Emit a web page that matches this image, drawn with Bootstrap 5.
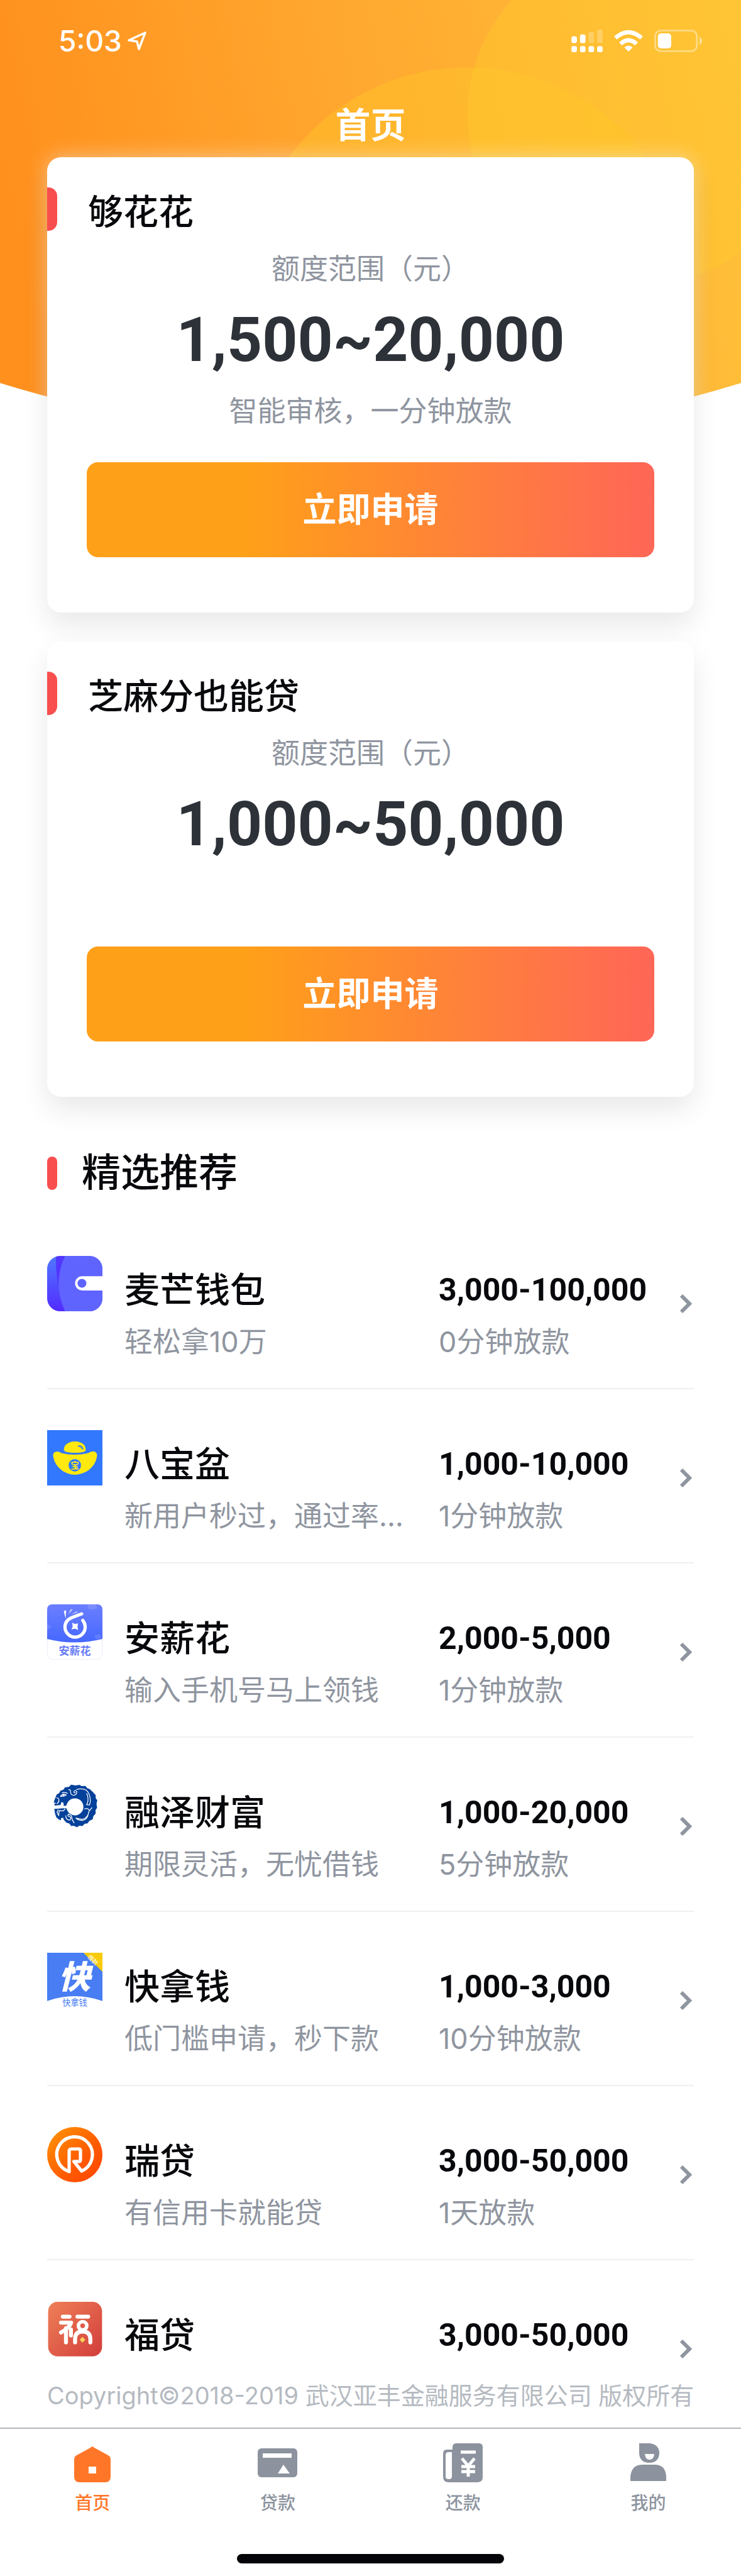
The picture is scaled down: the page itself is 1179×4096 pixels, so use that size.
<!DOCTYPE html>
<html lang="zh-CN">
<head>
<meta charset="utf-8">
<meta name="viewport" content="width=device-width, initial-scale=1">
<title>首页</title>
<link href="https://cdn.jsdelivr.net/npm/bootstrap@5.3.0/dist/css/bootstrap.min.css" rel="stylesheet">
<style>
  body { font-family: Inter, "Noto Sans CJK SC", sans-serif; color: #08090c; background: #fff; }
  svg { display: block; flex: none; }
  .stage { display: grid; grid-template-columns: minmax(0, 1fr); }
  .stage > * { grid-area: 1 / 1; }
  .hero-bg { width: 100%; height: 700px; }
  .status { padding: 34px 62px 0 93px; height: 96px; }
  .clock { font-size: 46px; line-height: 62px; font-weight: 500; }
  .page-title { font-size: 56px; line-height: 80px; font-weight: 700; margin: 63px 0 11px; }
  .side { padding-left: 75px; padding-right: 75px; }
  .loan { border: 0; border-radius: 22px; padding: 48px 63px 88px; margin-bottom: 46px; box-shadow: 0 20px 44px rgba(0, 0, 0, .09); }
  .lit { box-shadow: 0 20px 44px rgba(0, 0, 0, .09), 0 0 32px rgba(255, 255, 255, .5); }
  .loan-title { font-size: 56px; line-height: 78px; font-weight: 500; margin: 0 0 22px -63px; }
  .loan-title::before { content: ""; width: 16px; height: 69px; background: #f94e4e; border-radius: 0 14px 14px 0; margin-right: 49px; }
  .note { font-size: 45px; line-height: 60px; color: #8f959f; font-weight: 400; }
  .range { font-family: Roboto, sans-serif; font-weight: 700; font-size: 98px; line-height: 166px; color: #2d3138; }
  .apply { --bs-btn-color: #fff; --bs-btn-hover-color: #fff; border: 0; height: 151px; margin-top: 51px; border-radius: 18px; font-size: 54px; font-weight: 700; background: linear-gradient(90deg, #ffa019 28%, #ff6657); }
  .picks { font-size: 62px; line-height: 76px; font-weight: 500; margin: 83px 0 29px; }
  .picks::before { content: ""; width: 16px; height: 53px; background: #f94e4e; border-radius: 8px; margin-right: 39px; }
  .offer { display: flex; align-items: flex-start; gap: 35px; padding: 65px 3px 43px 0; border-bottom: 2px solid #f0f0f1; color: inherit; text-decoration: none; }
  .offer-last { border: 0; padding-bottom: 28px; }
  .offer-text { padding-top: 18px; }
  .offer-sum { width: 348px; flex: none; }
  .offer-name { font-size: 56px; line-height: 72px; font-weight: 500; }
  .amount { font-family: Roboto, sans-serif; font-weight: 700; font-size: 50px; line-height: 72px; white-space: nowrap; }
  .offer-text .note { margin-top: 17px; }
  .chev { margin-top: 60px; }
  .copyright { font-size: 38px; line-height: 60px; color: #b5bac1; margin-bottom: 21px; white-space: nowrap; }
  .tabbar { border-top: 2px solid #b4b6bc; padding: 23px 0 22px; }
  .tab { flex: 1 1 0; display: flex; flex-direction: column; align-items: center; gap: 13px; color: #8c939e; font-size: 28px; line-height: 40px; font-weight: 500; text-decoration: none; }
  .tab.active { color: #ff7628; }
  .home-bar { width: 36%; height: 15px; border-radius: 8px; background: #050509; margin: 61px auto 0; }
</style>
</head>
<body>
<div class="stage">
  <svg class="hero-bg" viewBox="0 0 1179 700" preserveAspectRatio="none" aria-hidden="true">
    <defs>
      <linearGradient id="sky" gradientUnits="userSpaceOnUse" x1="0" y1="250" x2="1179" y2="0">
        <stop offset="0" stop-color="#ff901d"/><stop offset=".5" stop-color="#ffa930"/><stop offset="1" stop-color="#ffc23a"/>
      </linearGradient>
      <clipPath id="dome"><path d="M0 0H1179V609Q590 790 0 609Z"/></clipPath>
    </defs>
    <g clip-path="url(#dome)">
      <rect width="1179" height="700" fill="url(#sky)"/>
      <circle cx="744" cy="462" r="355" fill="#ffc928" fill-opacity=".4"/>
      <circle cx="1016" cy="182" r="272" fill="#ffcb2e" fill-opacity=".4"/>
    </g>
  </svg>

  <div>
    <header class="text-white">
      <div class="status d-flex justify-content-between align-items-center">
        <div class="d-flex align-items-center gap-2">
          <span class="clock">5:03</span>
          <svg width="32" height="32" viewBox="0 0 32 32" fill="none" stroke="#fff" stroke-width="3.500" stroke-linejoin="round" aria-hidden="true"><path d="M29 3 3 15l13 2 3 12z"/></svg>
        </div>
        <div class="d-flex align-items-center gap-3">
          <svg width="50" height="36" viewBox="0 0 51 37" fill="#fff" aria-hidden="true">
            <rect y="11" width="9" height="11" rx="3"/><rect x="14" y="8" width="9" height="14" rx="3"/>
            <rect x="28" y="4" width="9" height="18" rx="3" opacity=".25"/><rect x="42" width="9" height="22" rx="3" opacity=".25"/>
            <rect y="27" width="9" height="10" rx="3"/><rect x="14" y="27" width="9" height="10" rx="3"/><rect x="28" y="27" width="9" height="10" rx="3"/><rect x="42" y="27" width="9" height="10" rx="3"/>
          </svg>
          <svg width="50" height="34" viewBox="0 0 50 36" fill="none" stroke="#fff" stroke-width="7" aria-hidden="true">
            <path d="M3 13Q25-6 47 13"/><path d="M11.500 23Q25 11 38.500 23"/><path d="M25 36 18 29Q25 23 32 29Z" fill="#fff" stroke="none"/>
          </svg>
          <svg width="76" height="36" viewBox="0 0 79 37" aria-hidden="true">
            <rect x="1.500" y="1.500" width="69" height="34" rx="9" fill="none" stroke="#fff" stroke-opacity=".4" stroke-width="3"/>
            <rect x="6" y="6" width="22" height="25" rx="5" fill="#fff"/><path d="M75 12Q79 14 79 18.500T75 25Z" fill="#fff" fill-opacity=".5"/>
          </svg>
        </div>
      </div>
      <h1 class="page-title text-center">首页</h1>
    </header>

    <main class="side">
      <section class="card loan lit text-center">
        <h2 class="loan-title d-flex align-items-start">够花花</h2>
        <div class="note">额度范围（元）</div>
        <div class="range">1,500~20,000</div>
        <div class="note">智能审核，一分钟放款</div>
        <button type="button" class="btn apply w-100">立即申请</button>
      </section>
      <section class="card loan text-center">
        <h2 class="loan-title d-flex align-items-start">芝麻分也能贷</h2>
        <div class="note">额度范围（元）</div>
        <div class="range">1,000~50,000</div>
        <div class="note">&nbsp;</div>
        <button type="button" class="btn apply w-100">立即申请</button>
      </section>

      <h2 class="picks d-flex align-items-center">精选推荐</h2>

      <a class="offer" href="#">
        <svg width="88" height="88" viewBox="0 0 93 93" aria-hidden="true">
          <defs><linearGradient id="wal" x2="0" y2="1"><stop stop-color="#5078ff"/><stop offset="1" stop-color="#522bff"/></linearGradient><clipPath id="walc"><rect width="93" height="93" rx="22"/></clipPath></defs>
          <g clip-path="url(#walc)"><rect width="93" height="93" fill="url(#wal)"/><path d="M15 0H32L19 52Q14 25 15 0Z" fill="#5336ff"/><path d="M30 0H93V93H30Q9 46 30 0Z" fill="#6064ff"/><path d="M93 34H59a12 12 0 0 0 0 24H93Z" fill="#fff"/><circle cx="58.500" cy="46" r="7.500" fill="#6064ff"/></g>
        </svg>
        <div class="offer-text flex-fill overflow-hidden"><div class="offer-name">麦芒钱包</div><div class="note text-nowrap">轻松拿10万</div></div>
        <div class="offer-text offer-sum"><div class="amount">3,000-100,000</div><div class="note">0分钟放款</div></div>
        <svg class="chev" width="20" height="32" viewBox="0 0 20 32" fill="none" stroke="#8f959f" stroke-width="6" aria-hidden="true"><path d="M3 3 16 16 3 29"/></svg>
      </a>

      <a class="offer" href="#">
        <svg width="88" height="88" viewBox="0 0 93 93" aria-hidden="true">
          <rect width="93" height="93" fill="#3278ff"/>
          <path d="M28 33Q28 24 38 20.500Q46 17.500 56 20.500Q65 24 65 33Q65 38 47 38T28 33Z" fill="#ffe90f"/><path d="M52 27q6-1 8 5" fill="none" stroke="#3278ff" stroke-width="2.500"/>
          <path d="M10 43Q10 36 17 36Q19 36 24 38.500Q46 44 69 38.500Q75 35 79 36Q84 37 84 43Q82 58 69 68Q46 82 25 68Q12 58 10 43Z" fill="#ffe90f"/>
          <circle cx="46.500" cy="59" r="10.500" fill="#3278ff"/><text x="46.500" y="64" font-size="14" font-weight="700" text-anchor="middle" fill="#ffe90f">宝</text>
        </svg>
        <div class="offer-text flex-fill overflow-hidden"><div class="offer-name">八宝盆</div><div class="note text-nowrap">新用户秒过，通过率…</div></div>
        <div class="offer-text offer-sum"><div class="amount">1,000-10,000</div><div class="note">1分钟放款</div></div>
        <svg class="chev" width="20" height="32" viewBox="0 0 20 32" fill="none" stroke="#8f959f" stroke-width="6" aria-hidden="true"><path d="M3 3 16 16 3 29"/></svg>
      </a>

      <a class="offer" href="#">
        <svg width="88" height="88" viewBox="0 0 93 93" aria-hidden="true">
          <defs><linearGradient id="axh" x2="0" y2="1"><stop stop-color="#6b7fff"/><stop offset="1" stop-color="#4668ff"/></linearGradient></defs>
          <rect x=".5" y=".5" width="92" height="92" rx="9" fill="#fff" stroke="#ecebfa"/>
          <path d="M0 9Q0 0 9 0H84Q93 0 93 9V58Q46 70 0 58Z" fill="url(#axh)"/><path d="M67 0H82L84 7 71 9ZM80 52 89 50 91 57 82 59ZM0 32 7 38 0 43Z" fill="#fff" opacity=".13"/>
          <path d="M58 16 42 22Q30 27 30 38A17 17 0 0 0 64 38Q64 32 60 27" fill="none" stroke="#fff" stroke-width="5.500" stroke-linecap="round"/>
          <path d="M42 31 47 33 52 32 51 37 52 43 47 41 41 42 43 37ZM28 11 32 10 31 24Z" fill="#fff"/><path d="M35 17 40 8 43 9ZM40 17 51 11 50 14Z" fill="#fff" opacity=".65"/>
          <text x="46.500" y="85" font-size="18" font-weight="700" text-anchor="middle" fill="#667bf8">安薪花</text>
        </svg>
        <div class="offer-text flex-fill overflow-hidden"><div class="offer-name">安薪花</div><div class="note text-nowrap">输入手机号马上领钱</div></div>
        <div class="offer-text offer-sum"><div class="amount">2,000-5,000</div><div class="note">1分钟放款</div></div>
        <svg class="chev" width="20" height="32" viewBox="0 0 20 32" fill="none" stroke="#8f959f" stroke-width="6" aria-hidden="true"><path d="M3 3 16 16 3 29"/></svg>
      </a>

      <a class="offer" href="#">
        <svg width="88" height="88" viewBox="12 4 279 279" aria-hidden="true">
          <path d="M45 123 60 85 72 78 80 65 94 60 102 48 122 46 133 35 156 39 175 36 186 42 205 41 215 53 227 57 237 67 248 78 257 88 257 103 265 113 261 132 264 151 256 164 257 180 245 194 242 209 225 217 216 230 201 232 190 243 173 242 163 250 145 242 133 243 124 231 110 227 97 213 92 201 82 204 82 214 70 210 58 199 52 181 48 157 108 153 116 170A43 43 0 1 0 111 134L108 141 96 142 94 126 84 122 80 137 50 140 48 130 60 130Z" fill="#03419a" fill-rule="evenodd"/>
          <g fill="none" stroke="#fff" stroke-width="4" stroke-linecap="round" stroke-linejoin="round">
            <path d="M79 94Q91 76 109 87Q96 95 79 94M88 75Q101 72 114 78M60 101Q75 101 70 119M63 130 72 119"/><circle cx="94" cy="87" r="3"/>
            <path d="M121 60Q133 59 130 73Q133 90 149 88Q163 83 161 69Q155 61 149 67Q143 77 153 75M161 59Q187 51 208 62Q230 79 230 119L226 137 211 136Q221 120 217 96Q214 81 211 80"/>
            <path d="M238 151 223 169Q218 202 190 210L157 203Q168 215 190 215Q216 211 220 180M201 157Q217 151 224 163"/>
            <path d="M102 157 94 167 73 166 70 191 62 174 68 161M106 191Q107 215 128 213Q136 201 125 196Q111 192 120 183L134 191 139 212 148 227"/>
          </g>
        </svg>
        <div class="offer-text flex-fill overflow-hidden"><div class="offer-name">融泽财富</div><div class="note text-nowrap">期限灵活，无忧借钱</div></div>
        <div class="offer-text offer-sum"><div class="amount">1,000-20,000</div><div class="note">5分钟放款</div></div>
        <svg class="chev" width="20" height="32" viewBox="0 0 20 32" fill="none" stroke="#8f959f" stroke-width="6" aria-hidden="true"><path d="M3 3 16 16 3 29"/></svg>
      </a>

      <a class="offer" href="#">
        <svg width="88" height="88" viewBox="0 0 93 93" aria-hidden="true">
          <path d="M0 0H93V81Q46 65 0 81Z" fill="#487df3"/><path d="M61 0H93V32Z" fill="#f8cb0c"/>
          <text x="77" y="16" font-size="10" text-anchor="middle" fill="#fff" transform="rotate(45 77 12)">借款</text>
          <text x="46" y="60" font-size="54" font-weight="900" font-style="italic" text-anchor="middle" fill="#fff">快</text>
          <text x="46.500" y="89" font-size="14" text-anchor="middle" fill="#487df3">快拿钱</text>
        </svg>
        <div class="offer-text flex-fill overflow-hidden"><div class="offer-name">快拿钱</div><div class="note text-nowrap">低门槛申请，秒下款</div></div>
        <div class="offer-text offer-sum"><div class="amount">1,000-3,000</div><div class="note">10分钟放款</div></div>
        <svg class="chev" width="20" height="32" viewBox="0 0 20 32" fill="none" stroke="#8f959f" stroke-width="6" aria-hidden="true"><path d="M3 3 16 16 3 29"/></svg>
      </a>

      <a class="offer" href="#">
        <svg width="88" height="88" viewBox="0 0 93 93" aria-hidden="true">
          <defs><linearGradient id="rui" x2="1" y2="1"><stop stop-color="#ff9800"/><stop offset=".6" stop-color="#ff5a00"/><stop offset="1" stop-color="#ff4200"/></linearGradient></defs>
          <circle cx="46.500" cy="46.500" r="46.500" fill="url(#rui)"/>
          <path d="M37 75A30 30 0 1 1 58 74L45 58H54Q56 58 56 55V40Q56 37 53 37H41Q37 37 37 41Z" fill="none" stroke="#fff" stroke-width="5.500" stroke-linejoin="round"/>
        </svg>
        <div class="offer-text flex-fill overflow-hidden"><div class="offer-name">瑞贷</div><div class="note text-nowrap">有信用卡就能贷</div></div>
        <div class="offer-text offer-sum"><div class="amount">3,000-50,000</div><div class="note">1天放款</div></div>
        <svg class="chev" width="20" height="32" viewBox="0 0 20 32" fill="none" stroke="#8f959f" stroke-width="6" aria-hidden="true"><path d="M3 3 16 16 3 29"/></svg>
      </a>

      <a class="offer offer-last" href="#">
        <svg width="88" height="88" viewBox="12 18 279 279" aria-hidden="true">
          <defs><linearGradient id="fu" x2="1" y2="1"><stop stop-color="#ef8058"/><stop offset="1" stop-color="#d23d3b"/></linearGradient></defs>
          <rect x="17" y="21" width="272" height="275" rx="48" fill="url(#fu)"/>
          <g fill="none" stroke="#fff" stroke-width="20" stroke-linecap="round" stroke-linejoin="round"><path d="M91 96H125M165 96H219M82 126H133Q126 151 82 176M107 154V226M132 161V191"/><circle cx="191" cy="142" r="21" stroke-width="18"/><path d="M153 226V208Q153 171 191 171T230 208V226"/></g>
          <path d="M190 198 205 212 190 227 176 212Z" fill="#f8d05a"/>
        </svg>
        <div class="offer-text flex-fill overflow-hidden"><div class="offer-name">福贷</div></div>
        <div class="offer-text offer-sum"><div class="amount">3,000-50,000</div></div>
        <svg class="chev" width="20" height="32" viewBox="0 0 20 32" fill="none" stroke="#8f959f" stroke-width="6" aria-hidden="true"><path d="M3 3 16 16 3 29"/></svg>
      </a>
      <div class="copyright text-center">Copyright©2018-2019 武汉亚丰金融服务有限公司 版权所有</div>
    </main>

    <footer class="tabbar">
      <nav class="d-flex" aria-label="主导航">
        <a class="tab active" href="#" aria-current="page">
          <svg width="64" height="62" viewBox="0 0 64 62" fill="currentColor" aria-hidden="true"><path fill-rule="evenodd" d="M32 5Q33 5 35 7L57 19Q61 21 61 26V53Q61 62 52 62H12Q3 62 3 53V26Q3 21 7 19L29 7Q31 5 32 5ZM26 37V48H38V37Z"/></svg>首页</a>
        <a class="tab" href="#">
          <svg width="64" height="62" viewBox="0 0 64 62" fill="currentColor" aria-hidden="true"><rect y="8" width="63" height="46" rx="6"/><path d="M8 16H54V23H8ZM41 34 51 48H32Z" fill="#fff"/></svg>贷款</a>
        <a class="tab" href="#">
          <svg width="64" height="62" viewBox="0 0 64 62" fill="currentColor" aria-hidden="true"><path d="M15 6Q15 0 21 0H57Q63 0 63 6V54Q63 62 54 62H9Q0 62 0 53V16Q0 10 6 10H15Z"/><path d="M9 14H14V53Q14 57 9 57T4 53V19Q4 14 9 14Z" fill="#fff"/><path d="M28 14H52M30 24 40 36 50 24M40 35V53M29 37H51M29 45H51" fill="none" stroke="#fff" stroke-width="5"/></svg>还款</a>
        <a class="tab" href="#">
          <svg width="64" height="62" viewBox="0 0 64 62" fill="currentColor" aria-hidden="true"><path d="M17 0H34Q49 2 49 16Q48 31 33 31T17 16Z"/><path d="M26 17H41Q40 26 33.500 26T26 17Z" fill="#fff"/><path d="M3 60V53Q5 34 22 34H42Q59 34 60 53V60Z"/></svg>我的</a>
      </nav>
      <div class="home-bar"></div>
    </footer>
  </div>
</div>
<script src="https://cdn.jsdelivr.net/npm/bootstrap@5.3.0/dist/js/bootstrap.bundle.min.js"></script>
</body>
</html>
